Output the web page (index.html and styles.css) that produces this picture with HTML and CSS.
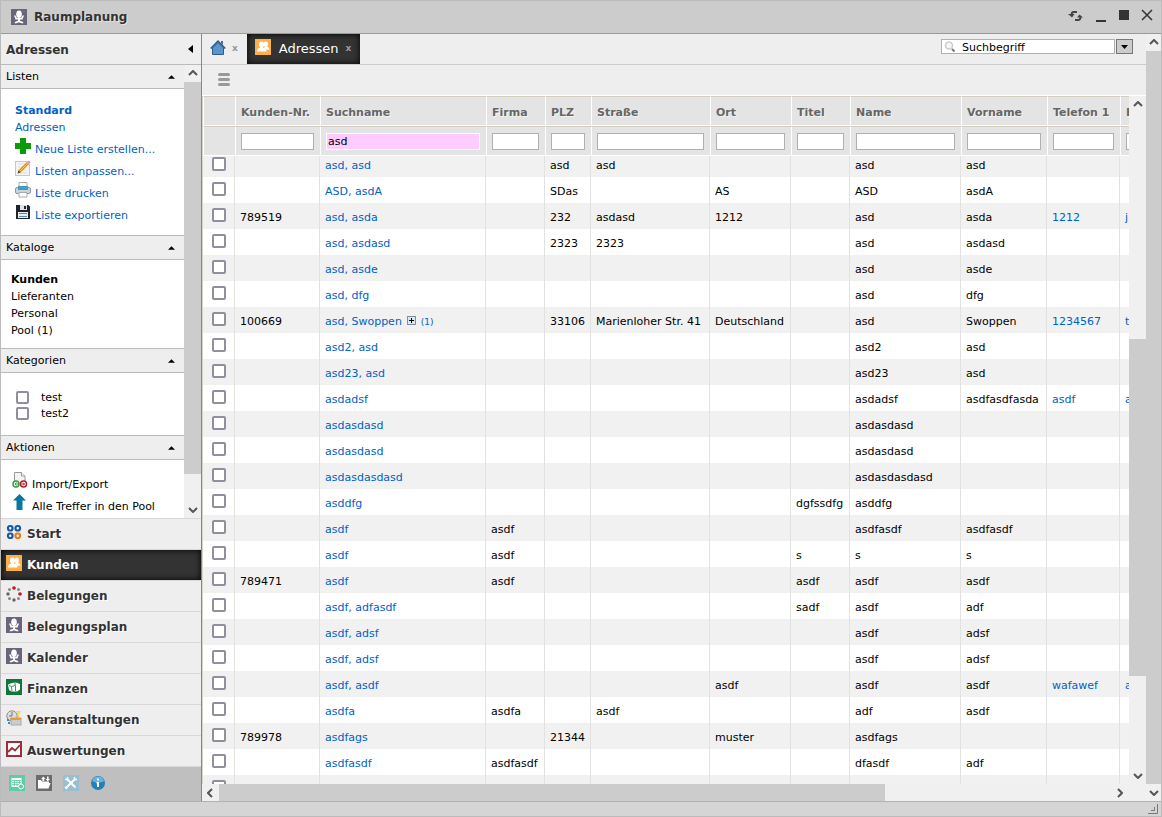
FILE: index.html
```html
<!DOCTYPE html>
<html lang="de">
<head>
<meta charset="utf-8">
<title>Raumplanung</title>
<link rel="stylesheet" href="styles.css">
</head>
<body>
<svg class="defs" aria-hidden="true">
  <symbol id="i-chair" viewBox="0 0 16 16"><rect width="16" height="16" fill="#6a6579"/><ellipse cx="8" cy="5.200" rx="2.800" ry="3.700" fill="#fff"/><path d="M3 6.500h1.500L6 9h4l1.500-2.500H13L11.500 10.500H9v1.200l3.200 1.300v1.200H10.500L8 13.200l-2.500 1H3.800V13L7 11.700v-1.200H4.500z" fill="#fff"/></symbol>
  <symbol id="i-people" viewBox="0 0 16 16"><rect width="16" height="16" fill="#fdb04a"/><ellipse cx="6.500" cy="5.500" rx="2.500" ry="3" fill="#fff"/><ellipse cx="10.800" cy="5.300" rx="2.100" ry="2.700" fill="#fff"/><path d="M2 12.500c0-2.500 1-3 3-3.700V7h3v1.500c2.500.7 3.500 1.500 3.500 4z" fill="#fff"/><path d="M9.500 7.500h2.800c.2.800 2.200.8 2.200 3.200h-3c-.5-1-1.500-1.700-2.300-2z" fill="#fff"/></symbol>
  <symbol id="i-up" viewBox="0 0 8 4"><path d="M4 0l4 4H0z" fill="#000"/></symbol>
  <symbol id="i-chev" viewBox="0 0 10 6"><path d="M1 5l4-4 4 4" fill="none" stroke="#555" stroke-width="2"/></symbol>
</svg>
<div class="window">
  <header class="titlebar">
    <svg class="icon"><use href="#i-chair"/></svg>
    <h1>Raumplanung</h1>
    <div class="controls">
      <button aria-label="Neu laden"><svg width="16" height="14" viewBox="0 0 16 14"><path d="M9 3H5.500C4 3 3.500 4.500 3.700 6" fill="none" stroke="#444" stroke-width="2"/><path d="M0 5l4 3.500L6.500 5z" fill="#444"/><path d="M7 11h3.500c1.500 0 2-1.500 1.800-3" fill="none" stroke="#444" stroke-width="2"/><path d="M15 8.500L11.500 5.500 9 8.500z" fill="#444"/></svg></button>
      <button aria-label="Minimieren"><svg width="12" height="14"><path d="M1 12h10" stroke="#333" stroke-width="2"/></svg></button>
      <button aria-label="Maximieren"><svg width="12" height="14"><rect x="1" y="1" width="10" height="10" fill="#333"/></svg></button>
      <button aria-label="Schließen"><svg width="12" height="14"><path d="M1 1l10 10M11 1L1 11" stroke="#333" stroke-width="1.500"/></svg></button>
    </div>
  </header>

  <div class="body">
    <aside class="sidebar">
      <div class="side-head"><h2>Adressen</h2><button aria-label="Einklappen"><svg width="5" height="8"><path d="M5 0v8L0 4z"/></svg></button></div>
      <div class="side-scroll">
        <div class="side-content">
          <section>
            <h3>Listen<svg class="tri"><use href="#i-up"/></svg></h3>
            <div class="lists">
              <a href="#"><b>Standard</b></a>
              <a href="#">Adressen</a>
              <ul class="icon-list">
                <li><svg class="icon" viewBox="0 0 16 16"><path d="M5 0h6v5h5v6h-5v5H5v-5H0V5h5z" fill="#0a9a0a"/></svg><a href="#">Neue Liste erstellen...</a></li>
                <li><svg class="icon" viewBox="0 0 16 16"><rect x=".5" y="1.500" width="14" height="14" fill="#f4f4f4" stroke="#c8c8c8"/><path d="M3 4h8M3 7h6M3 10h8M3 13h9" stroke="#ddd"/><path d="M4 12L13 3" stroke="#d98a1c" stroke-width="3"/><path d="M4.500 11.500L13 3" stroke="#ffd24d"/><path d="M12.500 3.500l2-2" stroke="#d9a0c8" stroke-width="3"/><path d="M2.500 13.500l1-3 2 2z" fill="#444"/></svg><a href="#">Listen anpassen...</a></li>
                <li><svg class="icon" viewBox="0 0 16 16"><path d="M4 .5h8V5H4z" fill="#fff" stroke="#aaa"/><rect x=".5" y="5.500" width="15" height="6" rx="1.500" fill="#cdd4d9" stroke="#8d989f"/><path d="M3 4h10v4H3z" fill="#3f9fc0"/><path d="M4 10.500h8V15H4z" fill="#fff" stroke="#aaa"/></svg><a href="#">Liste drucken</a></li>
                <li><svg class="icon" viewBox="0 0 16 16"><path d="M1 1h12.500L15 2.500V15H1z" fill="#20252b"/><path d="M5 1h7v5H5z" fill="#dde3e8"/><path d="M9 2h2v3H9z" fill="#20252b"/><path d="M3 8h10v6H3z" fill="#e9eef2"/><path d="M4 9.500h8M4 12.500h8" stroke="#5d87a8"/></svg><a href="#">Liste exportieren</a></li>
              </ul>
            </div>
          </section>
          <section>
            <h3>Kataloge<svg class="tri"><use href="#i-up"/></svg></h3>
            <div class="catalogs"><a href="#"><b>Kunden</b></a><a href="#">Lieferanten</a><a href="#">Personal</a><a href="#">Pool (1)</a></div>
          </section>
          <section>
            <h3>Kategorien<svg class="tri"><use href="#i-up"/></svg></h3>
            <div class="categories"><label><input type="checkbox">test</label><label><input type="checkbox">test2</label></div>
          </section>
          <section>
            <h3>Aktionen<svg class="tri"><use href="#i-up"/></svg></h3>
            <ul class="icon-list actions">
              <li><svg class="icon" viewBox="0 0 16 16"><path d="M2.500 9V.5h7L13 4v5" fill="#f3f3f3" stroke="#999"/><path d="M9.500.5V4H13" fill="#fff" stroke="#999"/><circle cx="4" cy="12" r="3" fill="#fff" stroke="#2f9d3a" stroke-width="1.500"/><path d="M6 12H3m1.500-1.500L3 12l1.500 1.500" stroke="#2f9d3a" fill="none"/><circle cx="11.500" cy="12" r="3" fill="#fff" stroke="#b3202e" stroke-width="1.500"/><path d="M9.500 12h3M11 10.500l1.500 1.500-1.500 1.500" stroke="#b3202e" fill="none"/></svg><a href="#">Import/Export</a></li>
              <li><svg class="icon" viewBox="0 0 16 16"><path d="M7.500 0L14 6.500H10.500V16h-6V6.500H1z" fill="#0b76a0"/></svg><a href="#">Alle Treffer in den Pool</a></li>
            </ul>
          </section>
        </div>
        <div class="vbar"><svg class="arrow"><use href="#i-chev"/></svg><div class="thumb side-thumb"></div><svg class="arrow down"><use href="#i-chev"/></svg></div>
      </div>
      <nav class="modules">
        <a href="#"><svg class="icon" viewBox="0 0 16 16" fill="#fff" stroke="#1558a3" stroke-width="2.200"><rect x="2" y="2" width="4.500" height="4.500" rx="2"/><rect x="9.500" y="2" width="4.500" height="4.500" rx="2"/><rect x="2" y="9.500" width="4.500" height="4.500" rx="2"/><rect x="9.500" y="9.500" width="4.500" height="4.500" rx="2" stroke="#f07818"/></svg>Start</a>
        <a href="#" class="active"><svg class="icon"><use href="#i-people"/></svg>Kunden</a>
        <a href="#"><svg class="icon" viewBox="0 0 16 16" fill="#888"><circle cx="8" cy="2" r="1.800" fill="#c8102e"/><circle cx="12.500" cy="3.500" r="1.500"/><circle cx="14" cy="8" r="1.800" fill="#c8102e"/><circle cx="12.500" cy="12.500" r="1.500"/><circle cx="8" cy="14" r="1.700" fill="#666"/><circle cx="3.500" cy="12.500" r="1.500"/><circle cx="2" cy="8" r="1.700" fill="#666"/><circle cx="3.500" cy="3.500" r="1.500"/></svg>Belegungen</a>
        <a href="#"><svg class="icon"><use href="#i-chair"/></svg>Belegungsplan</a>
        <a href="#"><svg class="icon"><use href="#i-chair"/></svg>Kalender</a>
        <a href="#"><svg class="icon" viewBox="0 0 16 16"><rect width="16" height="16" fill="#11743f"/><path d="M2 5.500L6 4l4-.5L14 5v5.500l-3 2H5.500L3 11z" fill="#fff"/><path d="M5.500 8l.5 4M9.500 7v5M3 6.500l3 1 4-1.500M8 5h2" stroke="#11743f" stroke-width=".8" fill="none"/></svg>Finanzen</a>
        <a href="#"><svg class="icon" viewBox="0 0 16 16"><circle cx="6" cy="6" r="5.200" fill="#ddd" stroke="#8e8e8e"/><path d="M6 2v4H3" stroke="#777" fill="none"/><path d="M10 1h5l-2 4v4h-1V5z" fill="#f5dc58"/><rect x="5" y="8" width="10" height="7" fill="#ccc" stroke="#aaa"/><path d="M4 9h11" stroke="#e99a42" stroke-width="2"/><path d="M1 9h2v2H1zm1 3h2v2H2z" fill="#3c8ac4"/></svg>Veranstaltungen</a>
        <a href="#"><svg class="icon" viewBox="0 0 16 16"><rect x="1" y="1" width="14" height="14" fill="#fff" stroke="#a12b3c" stroke-width="2"/><path d="M2 11l4-4 3 2.500L14 4" fill="none" stroke="#a12b3c" stroke-width="1.800"/></svg>Auswertungen</a>
      </nav>
      <div class="side-foot">
        <button aria-label="Kalender"><svg class="icon" viewBox="0 0 16 16"><rect width="16" height="16" fill="#61cba6"/><path d="M2.500 3h10v9h-10z" fill="#fff"/><path d="M3 5.500h9M3 7.500h9M3 9.500h9M5.500 5v6M8 5v6M10.500 5v6" stroke="#61cba6" stroke-width=".8"/><circle cx="12" cy="11.500" r="2.500" fill="#61cba6" stroke="#fff"/></svg></button>
        <button aria-label="Ablage"><svg class="icon" viewBox="0 0 16 16"><rect width="16" height="16" fill="#6c6c6c"/><path d="M2 5h3l1 1.500h7V8h1.500L12.500 13.500H2zM6.500 6V4H5l2.300-2.500L9.600 4H8.200v2zM11 1.500h1.600V4H14l-2.200 2.300L9.600 4H11z" fill="#fff"/></svg></button>
        <button aria-label="Werkzeuge"><svg class="icon" viewBox="0 0 16 16"><rect width="16" height="16" fill="#97bfd0"/><path d="M4 4l8.500 8.500M12 4l-8.500 8.500" stroke="#fff" stroke-width="2"/><path d="M2 4.500h2.500V2M14 4.500h-2.500V2M2 12l2 2" stroke="#fff" stroke-width="1.500" fill="none"/></svg></button>
        <button aria-label="Info"><svg class="icon" viewBox="0 0 16 16"><circle cx="8" cy="8" r="7" fill="#2680b8"/><path d="M2 6a6.300 6.300 0 0 1 12 0c-3 2-8 2-12 0z" fill="#69b1d8"/><path d="M7 3.500h2v2H7zM6.500 7H9v5H7V8.500h-.5z" fill="#fff"/></svg></button>
      </div>
    </aside>

    <main class="main">
      <div class="tabs">
        <a href="#" class="home" aria-label="Start"><svg width="16" height="16" viewBox="0 0 16 16"><path d="M11 1h2v4l-2-2z" fill="#426f9f"/><path d="M2.500 8L8 2.500 13.500 8v6.500h-11z" fill="#5b93cb" stroke="#2d5c90"/><path d="M.7 8.500L8 1.200l7.300 7.300" fill="none" stroke="#2d5c90" stroke-width="1.600"/></svg></a>
        <button class="close" aria-label="Tab schließen">x</button>
        <div class="tab"><svg class="icon"><use href="#i-people"/></svg><span>Adressen</span><button class="close" aria-label="Adressen schließen">x</button></div>
        <div class="search"><label><svg width="12" height="12" viewBox="0 0 12 12"><circle cx="5" cy="4.500" r="3.500" fill="#f5f5f5" stroke="#ccc" stroke-width="1.500"/><path d="M8 8l2.500 2.500" stroke="#777" stroke-width="2"/></svg><input type="text" value="Suchbegriff" aria-label="Suchbegriff"></label><button aria-label="Suchoptionen"><svg width="7" height="4"><path d="M0 0h7L3.500 4z"/></svg></button></div>
      </div>
      <div class="toolbar"><button aria-label="Menü"><svg width="12" height="13"><path d="M1.500 1.500h9M1.500 6.500h9M1.500 11.500h9" stroke="#999" stroke-width="3" stroke-linecap="round"/></svg></button></div>
      <div class="grid-area">
        <div class="grid-view">
          <table class="grid">
            <colgroup><col class="c-check"><col class="c-nr"><col class="c-such"><col class="c-firma"><col class="c-plz"><col class="c-str"><col class="c-ort"><col class="c-titel"><col class="c-name"><col class="c-vor"><col class="c-tel"><col class="c-mail"></colgroup>
            <thead>
              <tr><th></th><th>Kunden-Nr.</th><th>Suchname</th><th>Firma</th><th>PLZ</th><th>Straße</th><th>Ort</th><th>Titel</th><th>Name</th><th>Vorname</th><th>Telefon 1</th><th>E-Mail</th></tr>
              <tr class="filters"><th></th><th><input type="text" aria-label="Kunden-Nr."></th><th><input type="text" class="set" value="asd" aria-label="Suchname"></th><th><input type="text" aria-label="Firma"></th><th><input type="text" aria-label="PLZ"></th><th><input type="text" aria-label="Straße"></th><th><input type="text" aria-label="Ort"></th><th><input type="text" aria-label="Titel"></th><th><input type="text" aria-label="Name"></th><th><input type="text" aria-label="Vorname"></th><th><input type="text" aria-label="Telefon 1"></th><th><input type="text" aria-label="E-Mail"></th></tr>
            </thead>
            <tbody id="rows"></tbody>
          </table>
        </div>
        <div class="vbar"><svg class="arrow"><use href="#i-chev"/></svg><div class="track-top"></div><div class="thumb"></div><div class="track-bottom"></div><svg class="arrow down"><use href="#i-chev"/></svg></div>
      </div>
      <div class="hbar"><svg class="arrow left"><use href="#i-chev"/></svg><div class="track"><div class="thumb"></div></div><svg class="arrow right"><use href="#i-chev"/></svg><div class="corner"></div></div>
    </main>
    <div class="vbar outer"><svg class="arrow"><use href="#i-chev"/></svg><div class="thumb"></div><svg class="arrow down"><use href="#i-chev"/></svg></div>
  </div>
  <footer class="status"><svg width="10" height="10"><path d="M9.500 0v9.500H0M6.500 3v3.500H3" fill="none" stroke="#777"/></svg></footer>
</div>
<script src="app.js"></script>
</body>
</html>
```
FILE: styles.css
```css
* { box-sizing: border-box; }
body { margin: 0; font: 11px/17px "DejaVu Sans", sans-serif; color: #000; }
h1, h2, h3, ul { margin: 0; padding: 0; list-style: none; }
a { color: #0061c8; text-decoration: none; }
button { margin: 0; padding: 0; border: 0; background: none; font: inherit; display: flex; align-items: center; justify-content: center; }
svg { display: block; flex: none; }
.defs { position: absolute; width: 0; height: 0; }
.icon { width: 16px; height: 16px; }
input[type="checkbox"] { appearance: none; flex: none; display: block; width: 14px; height: 14px; margin: 0; border: 2px solid #8f8f9d; border-radius: 2px; background: #fff; }

.window { height: 100vh; display: flex; flex-direction: column; border: 1px solid #bbb; background: #eee; overflow: hidden; }
.titlebar { flex: none; height: 33px; display: flex; align-items: center; padding: 0 8px 0 10px; background: #ccc; border-bottom: 1px solid #999; }
.titlebar h1 { margin-left: 7px; font-size: 12px; line-height: 18px; color: #333; text-shadow: 1px 1px 0 #e4e4e4; }
.controls { display: flex; gap: 11px; margin-left: auto; padding-bottom: 2px; }
.body { flex: 1; min-height: 0; display: flex; }

.sidebar { flex: none; width: 201px; display: flex; flex-direction: column; border-right: 1px solid #888; }
.side-head { flex: none; height: 31px; display: flex; align-items: center; justify-content: space-between; padding: 0 8px 0 5px; border-bottom: 1px solid #bbb; }
.side-head h2 { font-size: 12px; line-height: 20px; padding-top: 2px; color: #333; }
.side-scroll { flex: 1; min-height: 0; display: flex; background: #fff; }
.side-content { flex: 1; overflow: hidden; }
.side-content h3 { height: 25px; display: flex; align-items: center; justify-content: space-between; padding: 0 9px 0 5px; font-size: 11px; line-height: 19px; font-weight: normal; background: #eee; border: solid #bbb; border-width: 1px 0; }
.side-content section:first-child h3 { height: 24px; border-top: 0; }
.tri { width: 7px; height: 4px; }
.lists { padding: 13px 14px 9px; }
.lists > a, .catalogs > a { display: block; }
.icon-list { padding-top: 2px; }
.icon-list li { display: flex; gap: 4px; height: 22px; white-space: nowrap; }
.icon-list a { padding-top: 3px; }
.catalogs { padding: 11px 10px 9px; }
.catalogs a, .actions a { color: #000; }
.categories { padding: 16px 15px 14px; }
.categories label { display: flex; align-items: center; gap: 12px; height: 16px; line-height: 17px; }
.categories input[type="checkbox"] { width: 13px; height: 13px; }
.icon-list.actions { padding: 12px 11px 0; }
.actions a { padding-top: 4px; }

.vbar { flex: none; width: 17px; display: flex; flex-direction: column; align-items: center; background: #f0f0f0; }
.arrow { width: 10px; height: 6px; margin: 5px 0 6px; flex: none; }
.down { transform: rotate(180deg); margin: 6px 0 5px; }
.thumb { background: #ccc; align-self: stretch; flex: 1; }
.vbar .side-thumb { margin-bottom: 27px; }
.outer { width: 15px; }

.modules { flex: none; }
.modules a { display: flex; gap: 5px; height: 31px; padding: 5px; border-top: 1px solid #d8d8d8; font-size: 12px; line-height: 21px; font-weight: bold; color: #333; text-shadow: 1px 1px 0 #fff; }
.modules a.active { background: #333; color: #fff; text-shadow: none; box-shadow: inset 0 0 6px #000; }
.side-foot { flex: none; height: 35px; display: flex; gap: 11px; padding: 0 8px 2px; border-top: 1px solid #d8d8d8; background: #bfbfbf; }

.main { flex: 1; min-width: 0; display: flex; flex-direction: column; }
.tabs { flex: none; height: 31px; display: flex; align-items: flex-start; padding-left: 8px; border-bottom: 1px solid #ccc; }
.home { margin-top: 6px; }
.close { height: 28px; margin-left: 6px; color: #999; font-size: 9px; font-weight: bold; }
.tab { height: 30px; display: flex; margin-left: 9px; padding: 0 9px 0 8px; background: #333; box-shadow: inset 0 0 6px #000; color: #fff; font-size: 13px; }
.tab .icon { margin-top: 5px; }
.tab span { margin-left: 8px; line-height: 29px; }
.tab .close { margin-left: 7px; }
.search { display: flex; gap: 1px; width: 192px; height: 15px; margin: 5px 13px 0 auto; }
.search label { flex: 1; min-width: 0; display: flex; align-items: center; padding-left: 2px; border: 1px solid #b0b0b0; background: #fff; }
.search input { flex: 1; min-width: 0; margin-left: 6px; padding: 1px 0 0; border: 0; outline: 0; height: 13px; font: inherit; }
.search button { width: 17px; border: 1px solid #777; background: #ccc; }
.toolbar { flex: none; height: 31px; padding: 8px 16px; border-bottom: 1px solid #fff; }

.grid-area { flex: 1; min-height: 0; display: flex; }
.grid-view { flex: 1; min-width: 0; overflow: hidden; background: #fff; border-left: 1px solid #d8d4c8; }
.grid { width: 1037px; table-layout: fixed; border-collapse: separate; border-spacing: 0; }
.c-check { width: 32px; }
.c-nr { width: 85px; }
.c-such { width: 166px; }
.c-firma, .c-titel { width: 59px; }
.c-plz { width: 46px; }
.c-str { width: 119px; }
.c-ort { width: 81px; }
.c-name { width: 111px; }
.c-vor { width: 86px; }
.c-tel { width: 73px; }
.c-mail { width: 120px; }
.grid th { height: 30px; padding: 2px 5px 0; text-align: left; color: #666; background: #e4e4e4; border: solid #fff; border-width: 1px 0 1px 1px; border-top-color: #d4cdc2; white-space: nowrap; text-shadow: 1px 1px 0 #f4f4f4; }
.grid .filters th { padding: 0 6px 0 5px; }
.grid th input { display: block; width: 100%; height: 17px; padding: 1px 1px 0; border: 1px solid #b0b0b0; background: #fff; font: inherit; font-weight: normal; }
.grid th input.set { border-color: #fff; background: #fcf; }
.grid td { height: 26px; padding: 2px 5px 0; border-right: 1px solid #e2e2e2; white-space: nowrap; }
.grid td:first-child { padding: 0 9px 2px; }
.grid tbody tr:nth-child(odd) { background: #f1f1f1; }
.grid tbody tr:first-child td { height: 21px; padding-top: 0; padding-bottom: 2px; }
.grid tbody tr:first-child td:first-child { padding-bottom: 5px; }
.grid small { font-size: 9px; line-height: 1; }
.plus { display: inline-block; margin: 0 1px 0 2px; }

.grid-area .track-top { flex: 226; }
.grid-area .thumb { flex: 337; }
.grid-area .track-bottom { flex: 91; }
.hbar { flex: none; height: 17px; display: flex; align-items: center; background: #f0f0f0; }
.left { transform: rotate(-90deg); margin: 0 4px 0 3px; }
.right { transform: rotate(90deg); margin: 0 4px 0 3px; }
.track { flex: 1; align-self: stretch; display: flex; }
.track .thumb { flex: none; width: 74.600%; }
.corner { width: 17px; }
.status { flex: none; height: 15px; display: flex; justify-content: flex-end; align-items: center; padding-right: 3px; border-top: 1px solid #b0b0b0; background: #d5d5d5; }
```
FILE: app.js
```js
// number, search name, company, zip, street, city, title, name, first name, phone, mail
const records = [
  ["", "asd, asd", "", "asd", "asd", "", "", "asd", "asd", "", ""],
  ["", "ASD, asdA", "", "SDas", "", "AS", "", "ASD", "asdA", "", ""],
  ["789519", "asd, asda", "", "232", "asdasd", "1212", "", "asd", "asda", "1212", "j"],
  ["", "asd, asdasd", "", "2323", "2323", "", "", "asd", "asdasd", "", ""],
  ["", "asd, asde", "", "", "", "", "", "asd", "asde", "", ""],
  ["", "asd, dfg", "", "", "", "", "", "asd", "dfg", "", ""],
  ["100669", "asd, Swoppen", "", "33106", "Marienloher Str. 41", "Deutschland", "", "asd", "Swoppen", "1234567", "t"],
  ["", "asd2, asd", "", "", "", "", "", "asd2", "asd", "", ""],
  ["", "asd23, asd", "", "", "", "", "", "asd23", "asd", "", ""],
  ["", "asdadsf", "", "", "", "", "", "asdadsf", "asdfasdfasda", "asdf", "a"],
  ["", "asdasdasd", "", "", "", "", "", "asdasdasd", "", "", ""],
  ["", "asdasdasd", "", "", "", "", "", "asdasdasd", "", "", ""],
  ["", "asdasdasdasd", "", "", "", "", "", "asdasdasdasd", "", "", ""],
  ["", "asddfg", "", "", "", "", "dgfssdfg", "asddfg", "", "", ""],
  ["", "asdf", "asdf", "", "", "", "", "asdfasdf", "asdfasdf", "", ""],
  ["", "asdf", "asdf", "", "", "", "s", "s", "s", "", ""],
  ["789471", "asdf", "asdf", "", "", "", "asdf", "asdf", "asdf", "", ""],
  ["", "asdf, adfasdf", "", "", "", "", "sadf", "asdf", "adf", "", ""],
  ["", "asdf, adsf", "", "", "", "", "", "asdf", "adsf", "", ""],
  ["", "asdf, adsf", "", "", "", "", "", "asdf", "adsf", "", ""],
  ["", "asdf, asdf", "", "", "", "asdf", "", "asdf", "asdf", "wafawef", "a"],
  ["", "asdfa", "asdfa", "", "asdf", "", "", "adf", "asdf", "", ""],
  ["789978", "asdfags", "", "21344", "", "muster", "", "asdfags", "", "", ""],
  ["", "asdfasdf", "asdfasdf", "", "", "", "", "dfasdf", "adf", "", ""],
  ["", "", "", "", "", "", "", "", "", "", ""]
];
const linked = [1, 9, 10];
const expander = '<svg class="plus" width="9" height="9"><rect x=".5" y=".5" width="8" height="8" fill="#dde6ec" stroke="#7890a0"/><path d="M2 4.500h5M4.500 2v5" stroke="#000"/></svg> <small>(1)</small>';
document.getElementById("rows").innerHTML = records.map(r =>
  '<tr><td><input type="checkbox" aria-label="Zeile auswählen"></td>' + r.map((v, i) => {
    const extra = v === "asd, Swoppen" ? " " + expander : "";
    return "<td>" + (v && linked.includes(i) ? `<a href="#">${v}${extra}</a>` : v) + "</td>";
  }).join("") + "</tr>").join("");
```
